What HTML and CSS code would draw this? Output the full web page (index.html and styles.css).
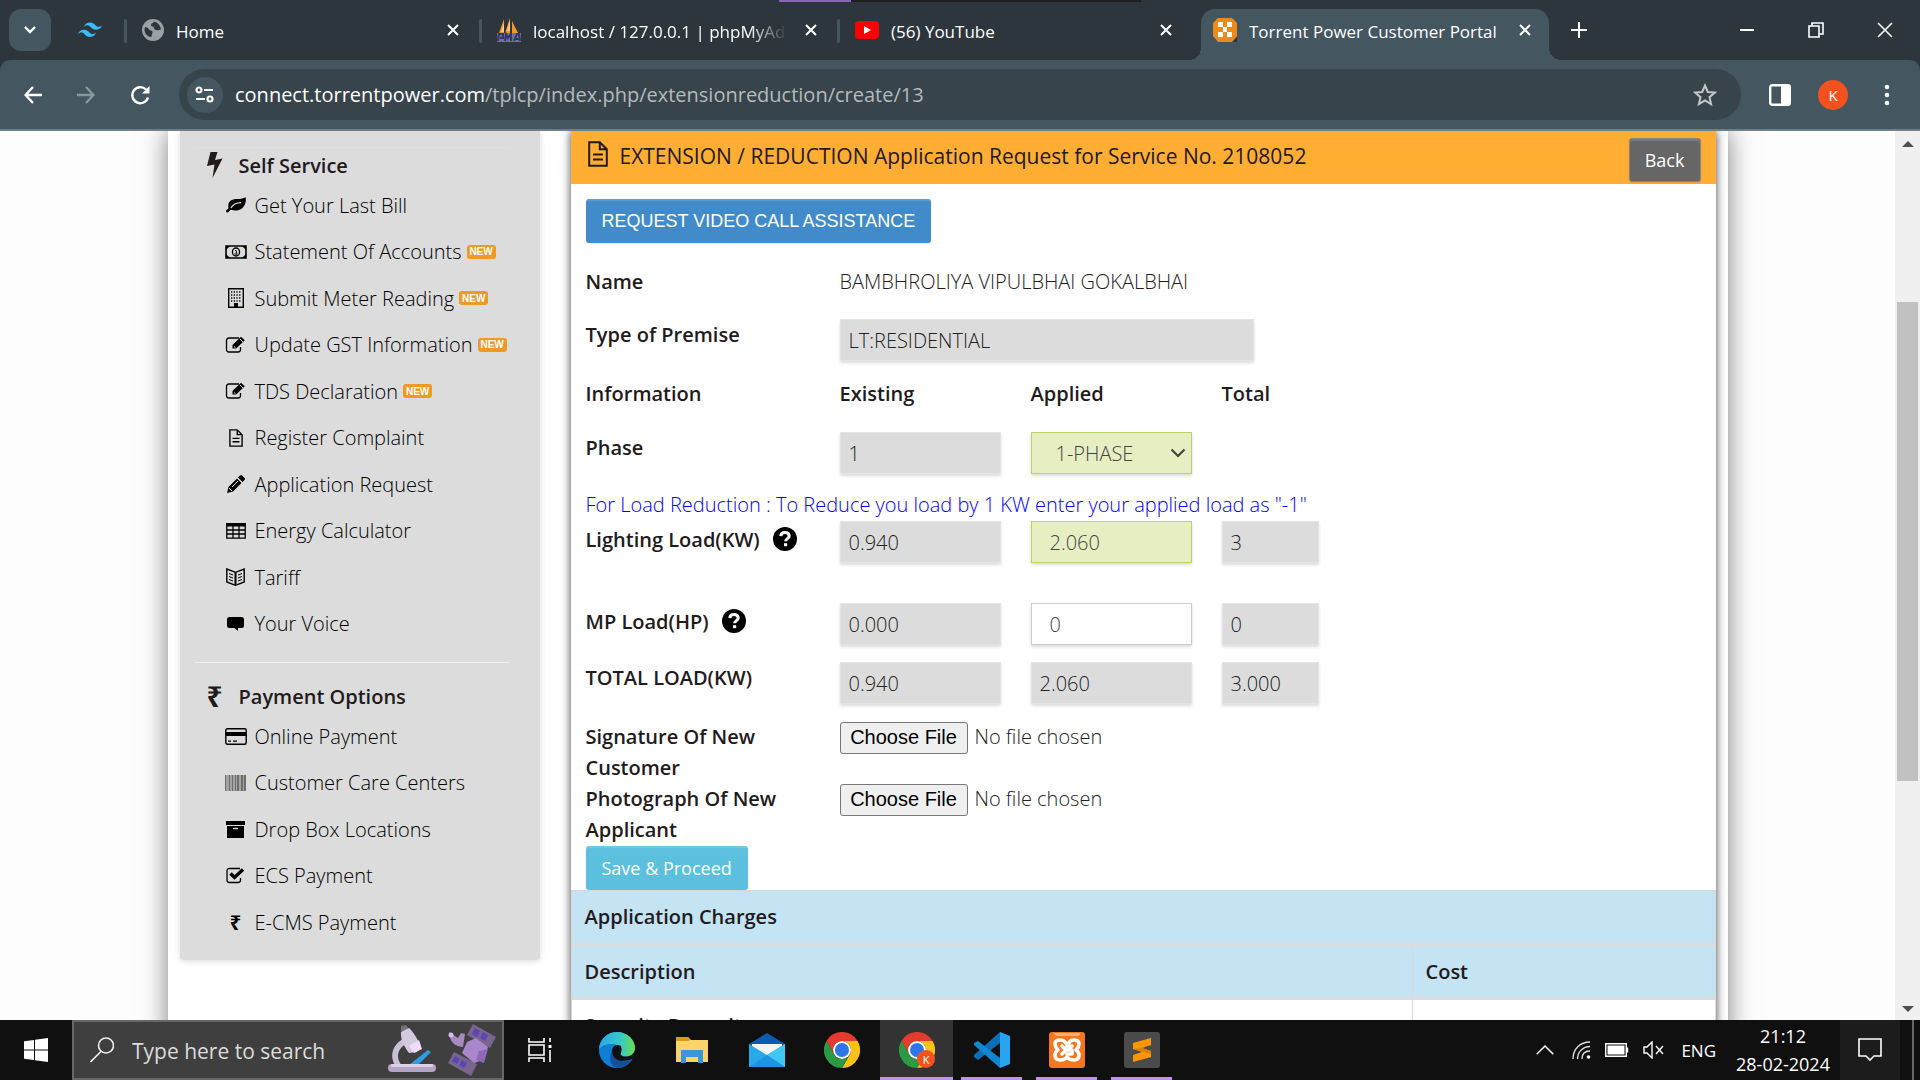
FILE: index.html
```html
<!DOCTYPE html>
<html lang="en">
<head>
<meta charset="utf-8">
<title>Torrent Power Customer Portal</title>
<link rel="stylesheet" href="styles.css">
</head>
<body>
<header class="browser">
  <div class="screen-share"></div>
  <div class="tabstrip">
    <button class="tab-search" aria-label="Search tabs"><svg width="16" height="16" viewBox="0 0 16 16"><path d="M3 5l5 5 5-5" fill="none" stroke="#fff" stroke-width="2.4"/></svg></button>
    <div class="tab pinned"><svg width="24" height="16" viewBox="0 0 24 15"><path fill="#38bdf8" d="M12 0C8.800 0 6.800 1.500 6 4.600c1.200-1.500 2.600-2.100 4.200-1.700.9.200 1.600.900 2.300 1.600C13.700 5.700 15 7.200 18 7.200c3.200 0 5.200-1.500 6-4.600-1.200 1.500-2.600 2.100-4.200 1.700-.9-.200-1.600-.9-2.300-1.600C16.300 1.500 15 0 12 0zM6 7.200c-3.200 0-5.200 1.500-6 4.600 1.200-1.500 2.600-2.100 4.200-1.700.9.200 1.600.9 2.300 1.600C7.700 12.900 9 14.400 12 14.400c3.200 0 5.200-1.500 6-4.600-1.200 1.500-2.600 2.100-4.200 1.700-.9-.2-1.600-.9-2.300-1.600C10.300 8.700 9 7.200 6 7.200z"/></svg></div>
    <div class="tab home">
      <svg width="22" height="22" viewBox="0 0 22 22"><circle cx="11" cy="11" r="11" fill="#9aa0a6"/><path d="M3 8c2 0 3 1 4 2.500s3 .5 3.500 2-1 2.500-1 5.500c-4 0-7-3.500-7-7.500zM12 2.500c-.5 2-3 1.500-3 3.500s3 1 3 3 3 2.500 5 2 2-1 2-1-1-6-7-7.500z" fill="#2c363c"/></svg>
      <span class="tab-title">Home</span>
      <button class="close" aria-label="Close tab"><svg width="14" height="14" viewBox="0 0 14 14"><path d="M2 2l10 10M12 2L2 12" stroke="#fff" stroke-width="2"/></svg></button>
    </div>
    <div class="tab pma">
      <svg width="24" height="24" viewBox="0 0 24 24"><path d="M7 1v14H2zM13 0v15H8zM15 3l6 12h-6z" fill="#f5962b"/><path d="M4 14l3-9v9zM10 13l3-11v11z" fill="#ffc98a"/><path d="M0 15h24v9H0z" fill="#a9a9c4" opacity=".55"/><path d="M1 23l1-7h4v4H3m5 3l1-7 2 4 3-4v7m3 0l3-7h2l1 7m-5-2h5" fill="none" stroke="#34346e" stroke-width="2"/></svg>
      <span class="tab-title fade">localhost / 127.0.0.1 | phpMyAdmin</span>
      <button class="close" aria-label="Close tab"><svg width="14" height="14" viewBox="0 0 14 14"><path d="M2 2l10 10M12 2L2 12" stroke="#fff" stroke-width="2"/></svg></button>
    </div>
    <div class="tab yt">
      <svg width="24" height="18" viewBox="0 0 24 18"><rect width="24" height="18" rx="4" fill="#f00"/><path d="M9 5l7 4-7 4z" fill="#fff"/></svg>
      <span class="tab-title">(56) YouTube</span>
      <button class="close" aria-label="Close tab"><svg width="14" height="14" viewBox="0 0 14 14"><path d="M2 2l10 10M12 2L2 12" stroke="#fff" stroke-width="2"/></svg></button>
    </div>
    <div class="tab active">
      <svg width="24" height="24" viewBox="0 0 24 24"><path d="M20 24h4v-5z" fill="#24323a"/><path d="M5 0h14l5 5v13l-5 6H5l-5-6V5z" fill="#ee8a1a"/><path d="M5 4h5v5H5zM14 4h5v5h-5zM10 9h4v5h-4zM5 14h5v5H5zM14 14h5v5h-5z" fill="#fff"/></svg>
      <span class="tab-title">Torrent Power Customer Portal</span>
      <button class="close" aria-label="Close tab"><svg width="14" height="14" viewBox="0 0 14 14"><path d="M2 2l10 10M12 2L2 12" stroke="#fff" stroke-width="2"/></svg></button>
    </div>
    <button class="new-tab" aria-label="New tab"><svg width="16" height="16" viewBox="0 0 16 16"><path d="M8 0v16M0 8h16" stroke="#fff" stroke-width="2"/></svg></button>
    <div class="window-buttons">
      <button aria-label="Minimize"><svg width="16" height="16" viewBox="0 0 16 16"><path d="M1 8h14" stroke="#fff" stroke-width="2"/></svg></button>
      <button aria-label="Restore"><svg width="16" height="16" viewBox="0 0 16 16"><path d="M1 4h10v11H1zM4 4V1h11v11h-4" fill="none" stroke="#fff" stroke-width="1.600"/></svg></button>
      <button aria-label="Close"><svg width="16" height="16" viewBox="0 0 16 16"><path d="M1 1l14 14M15 1L1 15" stroke="#fff" stroke-width="1.600"/></svg></button>
    </div>
  </div>
  <div class="toolbar">
    <button aria-label="Back"><svg width="18" height="18" viewBox="0 0 18 18"><path d="M18 9H2M9 1L1.500 9 9 17" fill="none" stroke="#fff" stroke-width="2.300"/></svg></button>
    <button aria-label="Forward"><svg width="18" height="18" viewBox="0 0 18 18"><path d="M0 9h16M9 1l7.500 8L9 17" fill="none" stroke="#8b979d" stroke-width="2.300"/></svg></button>
    <button aria-label="Reload"><svg width="20" height="20" viewBox="0 0 20 20"><path d="M18 12.500A8 8 0 1 1 16 4.500L18 6.500" fill="none" stroke="#fff" stroke-width="2.400"/><path d="M19.500 1v7.500H12z" fill="#fff"/></svg></button>
    <div class="address">
      <button class="site-info" aria-label="Site information"><svg width="20" height="18" viewBox="0 0 20 18"><g fill="none" stroke="#fff" stroke-width="2.200"><circle cx="4" cy="4" r="2.500"/><path d="M9 4h9M1 13h9"/><circle cx="15" cy="13" r="2.500"/></g></svg></button>
      <span class="url"><b>connect.torrentpower.com</b>/tplcp/index.php/extensionreduction/create/13</span>
      <svg class="star" width="24" height="24" viewBox="0 0 24 24"><path d="M12 2.500l2.800 6.500 7 .6-5.300 4.600 1.600 6.900-6.100-3.700-6.100 3.700 1.600-6.900L2.200 9.600l7-.6z" fill="none" stroke="#c4c7c9" stroke-width="2"/></svg>
    </div>
    <button class="panel-button" aria-label="Side panel"><svg width="22" height="22" viewBox="0 0 22 22"><rect x="1.200" y="1.200" width="19.600" height="19.600" rx="2" fill="none" stroke="#fff" stroke-width="2.400"/><path d="M12 1h9v20h-9z" fill="#fff"/></svg></button>
    <span class="profile">K</span>
    <button class="menu" aria-label="Menu"><svg width="6" height="22" viewBox="0 0 6 22"><g fill="#fff"><circle cx="3" cy="3" r="2.300"/><circle cx="3" cy="11" r="2.300"/><circle cx="3" cy="19" r="2.300"/></g></svg></button>
  </div>
</header>

<svg class="sprite" aria-hidden="true">
  <symbol id="edit" viewBox="0 0 22 18"><path d="M14 2H4Q1.500 2 1.500 4.500v9Q1.500 16 4 16h9q2.500 0 2.500-2.500V11" fill="none" stroke="#000" stroke-width="1.300"/><path d="M7.500 12.500V9L16 .800l3.800 3.500-8.600 8.200z" fill="#000"/><path d="M9 10.500l1.500 1.200M15 3l3 3" stroke="#dcdcdc" stroke-width="1"/></symbol>
  <symbol id="file" viewBox="0 0 20 26"><path d="M1.200 1.200h10.600l7 7v16.600H1.200zM11.800 1.200v7h7" fill="none" stroke="currentColor" stroke-width="2"/><path d="M5 13.500h10M5 18.500h10" stroke="currentColor" stroke-width="2"/></symbol>
  <symbol id="help" viewBox="0 0 24 24"><circle cx="12" cy="12" r="12" fill="#000"/><path d="M7.800 9.200Q8 5.600 12 5.600t4.200 3.300c0 2.600-3.600 2.800-3.600 5.400" fill="none" stroke="#fff" stroke-width="3"/><path d="M11 16.200h3.200v3H11z" fill="#fff"/></symbol>
</svg>

<main class="viewport">
  <div class="page">
    <div class="site">
      <nav class="sidebar">
        <section class="group first">
          <h2><svg width="16" height="26" viewBox="0 0 16 26"><path d="M3.500 0h7L8 8l7.500-1.500L5.500 26l2-13.500L0 14z" fill="#231a1c"/></svg>Self Service</h2>
          <ul>
            <li><a href="#"><span class="ico"><svg width="20" height="16" viewBox="0 0 20 16"><path d="M19.500 0c1.500 6-2 13-8.500 13.500-3 .3-5-1-6.500-.5-1 .5-2 2.500-3 2.500-.8 0-1.500-.8-1.400-1.500C.3 12.500 2.500 12 2.500 11 1 3.500 7 2 11 2c4 0 7-.5 8.500-2z"/><path d="M5 11c2-3.500 5.500-5.200 10-5.300" fill="none" stroke="#dcdcdc" stroke-width="1.300"/></svg></span>Get Your Last Bill</a></li>
            <li><a href="#"><span class="ico"><svg width="22" height="14" viewBox="0 0 22 14"><path d="M1 1h20v12H1z" fill="none" stroke="#000" stroke-width="1.600"/><path d="M1 1h4L1 5zM21 1v4l-4-4zM1 13V9l4 4zM21 13h-4l4-4z"/><ellipse cx="11" cy="7" rx="3.600" ry="4" fill="none" stroke="#000" stroke-width="1.300"/><path d="M10 5.500h1.300V9M9.500 9h3" fill="none" stroke="#000"/></svg></span>Statement Of Accounts<span class="new">NEW</span></a></li>
            <li><a href="#"><span class="ico"><svg width="16" height="20" viewBox="0 0 16 20"><path d="M.700.700h14.600v18.600H.700z" fill="none" stroke="#000" stroke-width="1.400"/><path d="M3 4h10M3 7h10M3 10h10M3 13h10" stroke="#000" stroke-width="1.300" stroke-dasharray="1.300 1.400"/><path d="M6 15h4v4H6z"/></svg></span>Submit Meter Reading<span class="new">NEW</span></a></li>
            <li><a href="#"><span class="ico"><svg width="22" height="18"><use href="#edit"/></svg></span>Update GST Information<span class="new">NEW</span></a></li>
            <li><a href="#"><span class="ico"><svg width="22" height="18"><use href="#edit"/></svg></span>TDS Declaration<span class="new">NEW</span></a></li>
            <li><a href="#"><span class="ico"><svg width="14" height="18"><use href="#file"/></svg></span>Register Complaint</a></li>
            <li><a href="#"><span class="ico"><svg width="18" height="18" viewBox="0 0 18 18"><path d="M0 18l1.500-6L10 3.500 14.500 8 6 16.500zM11 2.500L13 .5q1-1 2 0L17.500 3q1 1 0 2l-2 2z"/><path d="M2 13l3 3M5 12l6-6" stroke="#dcdcdc" stroke-width="1"/></svg></span>Application Request</a></li>
            <li><a href="#"><span class="ico"><svg width="20" height="16" viewBox="0 0 20 16"><path d="M.8.8h18.400v14.400H.8zM7 3v12M13 3v12M1 7h18M1 11h18" fill="none" stroke="#000" stroke-width="1.300"/><path d="M0 0h20v3.500H0z"/></svg></span>Energy Calculator</a></li>
            <li><a href="#"><span class="ico"><svg width="19" height="18" viewBox="0 0 19 18"><path d="M.8 1l8.700 3.300L18.200 1v13l-8.700 3.300L.8 14z" fill="none" stroke="#000" stroke-width="1.400"/><path d="M9.500 4v13" stroke="#000" stroke-width="2"/><path d="M3 5.500l4 1.500M3 8.500L7 10M3 11.500L7 13M16 5.500L12 7M16 8.500L12 10M16 11.500L12 13" stroke="#000" stroke-width="1"/></svg></span>Tariff</a></li>
            <li><a href="#"><span class="ico"><svg width="17" height="14" viewBox="0 0 17 14"><path d="M2.500 0h12Q17 0 17 2.500v6q0 2.500-2.500 2.500H11v3l-3.500-3h-5Q0 11 0 8.500v-6Q0 0 2.500 0z"/></svg></span>Your Voice</a></li>
          </ul>
        </section>
        <section class="group">
          <h2><span class="rupee">₹</span>Payment Options</h2>
          <ul>
            <li><a href="#"><span class="ico"><svg width="22" height="17" viewBox="0 0 22 17"><rect x=".8" y=".8" width="20.400" height="15.400" rx="1.500" fill="none" stroke="#000" stroke-width="1.400"/><path d="M1 4h20v4H1zM3 12.500h3v1.300H3zM8 12.500h4v1.300H8z"/></svg></span>Online Payment</a></li>
            <li><a href="#"><span class="ico"><svg width="22" height="16" viewBox="0 0 22 16"><path d="M0 0h21v16H0z" fill="#a4a4a4"/><path d="M0 0h1v16H0zM4 0h1v16H4zM7 0h1v16H7zM10 0h1v16h-1zM12 0h2v16h-2zM16 0h2v16h-2zM19 0h2v16h-2z" fill="#6e6e6e"/></svg></span>Customer Care Centers</a></li>
            <li><a href="#"><span class="ico"><svg width="19" height="17" viewBox="0 0 19 17"><path d="M0 0h19v4H0zM1 5h17v12H1z"/><path d="M7 7.500h5" stroke="#dcdcdc" stroke-width="1.400"/></svg></span>Drop Box Locations</a></li>
            <li><a href="#"><span class="ico"><svg width="19" height="17" viewBox="0 0 19 17"><path d="M14 1.500H3.500Q1 1.500 1 4v9q0 2.500 2.500 2.500H12q2.500 0 2.500-2.500v-2" fill="none" stroke="#000" stroke-width="1.300"/><path d="M4.500 6.500L8.500 10.500 17 2.500" fill="none" stroke="#000" stroke-width="3.400"/></svg></span>ECS Payment</a></li>
            <li><a href="#"><span class="ico rupee">₹</span>E-CMS Payment</a></li>
          </ul>
        </section>
      </nav>

      <article class="panel">
        <div class="panel-head">
          <h1><svg width="20" height="26"><use href="#file"/></svg>EXTENSION / REDUCTION Application Request for Service No. 2108052</h1>
          <button class="btn back">Back</button>
        </div>
        <form class="form" onsubmit="return false">
          <button type="button" class="btn video">REQUEST VIDEO CALL ASSISTANCE</button>
          <div class="row name"><strong>Name</strong><span class="wide">BAMBHROLIYA VIPULBHAI GOKALBHAI</span></div>
          <div class="row"><label for="premise">Type of Premise</label><input id="premise" class="wide" value="LT:RESIDENTIAL" readonly></div>
          <div class="row info"><strong>Information</strong><strong>Existing</strong><strong>Applied</strong><strong>Total</strong></div>
          <div class="row phase"><label for="phase">Phase</label><input aria-label="Existing phase" value="1" readonly>
            <span class="select"><select id="phase" class="edited"><option>1-PHASE</option><option>3-PHASE</option></select><svg width="16" height="10" viewBox="0 0 16 10"><path d="M1.500 1.500L8 8l6.500-6.500" fill="none" stroke="#444" stroke-width="2.200"/></svg></span></div>
          <p class="hint">For Load Reduction : To Reduce you load by 1 KW enter your applied load as "-1"</p>
          <div class="row light"><label for="light">Lighting Load(KW)<svg width="24" height="24"><use href="#help"/></svg></label><input aria-label="Existing lighting load" value="0.940" readonly><input id="light" class="edited" value="2.060"><input aria-label="Total lighting load" value="3" readonly></div>
          <div class="row mp"><label for="mp">MP Load(HP)<svg width="24" height="24"><use href="#help"/></svg></label><input aria-label="Existing MP load" value="0.000" readonly><input id="mp" class="plain" value="0"><input aria-label="Total MP load" value="0" readonly></div>
          <div class="row sum"><label for="total">TOTAL LOAD(KW)</label><input aria-label="Existing total load" value="0.940" readonly><input aria-label="Applied total load" value="2.060" readonly><input id="total" value="3.000" readonly></div>
          <div class="row sum"><label for="sign">Signature Of New Customer</label><input id="sign" class="wide" type="file"></div>
          <div class="row photo"><label for="photo">Photograph Of New Applicant</label><input id="photo" class="wide" type="file"></div>
          <button class="btn save">Save &amp; Proceed</button>
        </form>
        <table class="charges">
          <thead>
            <tr><th colspan="2">Application Charges</th></tr>
            <tr><th>Description</th><th class="cost">Cost</th></tr>
          </thead>
          <tbody><tr><td>Security Deposit</td><td></td></tr></tbody>
        </table>
      </article>
    </div>
  </div>
  <div class="scrollbar"><span class="arrow up"></span><span class="thumb"></span><span class="arrow down"></span></div>
</main>

<footer class="taskbar">
  <button class="start" aria-label="Start"><svg width="24" height="24" viewBox="0 0 24 24"><path d="M0 3.200L10 2v9.500H0zM11 1.800L24 0v11.500H11zM0 12.500h10V22L0 20.800zM11 12.500h13V24l-13-1.800z" fill="#fff"/></svg></button>
  <div class="search">
    <svg width="24" height="26" viewBox="0 0 24 26"><circle cx="16" cy="8.500" r="7.500" fill="none" stroke="#f0f0f0" stroke-width="1.600"/><path d="M11 14.500L.5 25" stroke="#f0f0f0" stroke-width="1.600"/></svg>
    <input aria-label="Search" placeholder="Type here to search">
    <svg width="48" height="50" viewBox="0 0 48 50"><path d="M19 12C4 18 0 32 9 43h7C6 33 9 22 22 17z" fill="#c9c0d6"/><path d="M13 1l5-1 3 4-4 4-4-2z" fill="#77717d"/><path d="M13 7l8-4c4 3 9 12 11 17l-3 7-8 1c-4-5-9-14-8-21z" fill="#d3cadd"/><path d="M21 21l10-6 3 9-8 4z" fill="#f0dcff"/><path d="M21 40l19-15 3 2-14 14z" fill="#2f9ee6"/><rect y="39" width="48" height="8" rx="4" fill="#b6a6c6"/><rect x="3" y="39" width="42" height="3" rx="1" fill="#dccfe8"/></svg>
    <svg width="48" height="52" viewBox="0 0 48 52"><path d="M25 0l23 13-6 11-23-13zM6 28l23 12-6 12L0 39z" fill="#77658d"/><path d="M27 4l5 3-3 6-5-3zM35 8l5 3-3 6-5-3zM7 32l5 3-3 5-5-3zM14 36l5 3-3 5-5-3z" fill="#5b45b5"/><path d="M1 8c1 10 5 14 14 15l2-13-4-1-3 5z" fill="#a58abf"/><circle cx="3" cy="11" r="2.500" fill="#d8b8f5"/><path d="M19 18l9-4 12 9-5 13-9 3-12-10z" fill="#a987cd"/><path d="M31 27l9-2-4 14-8-3z" fill="#8f68bd"/></svg>
  </div>
  <button class="task" aria-label="Task view"><svg width="24" height="24" viewBox="0 0 24 24"><path d="M1 0v4h15V0M1 24v-4h15v4M1 7h15v10H1zM22 0v4M22 12v12" fill="none" stroke="#fff" stroke-width="1.600"/><path d="M20.500 7h3v3h-3z" fill="#fff"/></svg></button>
  <button class="app" aria-label="Edge"><svg width="36" height="36" viewBox="0 0 36 36"><defs><linearGradient id="eg" x1="0" x2="1"><stop offset="0" stop-color="#2aa7e8"/><stop offset=".6" stop-color="#36c8c8"/><stop offset="1" stop-color="#6be048"/></linearGradient></defs><circle cx="18" cy="18" r="18" fill="#0f7fd6"/><path d="M0 17C1 6 9 0 18 0c11 0 18 8 18 16 0 6-5 8.500-9 8.500-5 0-6-2-5-4 2-4-1-7-5-8C10 11 3 13 0 17z" fill="url(#eg)"/><path d="M22 14c-6-3-10 2-9 8 1 3 3 6 8 7 5 0 9-1 13-2l2-4V17c0 5-5 7.500-9 7.500-5 0-6-2-5-4q1-4 0-6.500z" fill="#111"/><path d="M13 19c0 9 10 13 20 8-3 6-9 9-15 9-6-1-9-9-5-17z" fill="#12509a"/></svg></button>
  <button class="app" aria-label="File Explorer"><svg width="32" height="28" viewBox="0 0 32 28"><path d="M0 1h12l3 3h17v22H0z" fill="#fcd366"/><path d="M0 1h12l2 3-2 1H0z" fill="#dd9a0b"/><path d="M5 14h22v13h-5v-6H10v6H5z" fill="#3b95d8"/></svg></button>
  <button class="app" aria-label="Mail"><svg width="36" height="34" viewBox="0 0 36 34"><path d="M0 11L18 0l18 11v4H0z" fill="#0a5cb0"/><path d="M3 11h30v12H3z" fill="#f4f4f4"/><path d="M0 11l18 11 18-11v23H0z" fill="#28a9ea"/><path d="M18 22l18-11v23z" fill="#3fc8f5"/><path d="M0 34l18-12 18 12z" fill="#1c95e0"/></svg></button>
  <button class="app" aria-label="Chrome"><svg width="36" height="36" viewBox="0 0 36 36"><path d="M2.400 9A18 18 0 0 1 33.600 9H18a9 9 0 0 0-7.800 13.500z" fill="#e33b2e"/><path d="M33.600 9A18 18 0 0 1 18 36l7.800-13.500A9 9 0 0 0 18 9z" fill="#fbc116"/><path d="M18 36A18 18 0 0 1 2.400 9l7.800 13.500A9 9 0 0 0 25.800 22.500z" fill="#2a9a45"/><circle cx="18" cy="18" r="9" fill="#fff"/><circle cx="18" cy="18" r="7" fill="#2f75ea"/></svg></button>
  <button class="app current" aria-label="Chrome, profile K"><svg width="36" height="36" viewBox="0 0 36 36"><path d="M2.400 9A18 18 0 0 1 33.600 9H18a9 9 0 0 0-7.800 13.500z" fill="#e33b2e"/><path d="M33.600 9A18 18 0 0 1 18 36l7.800-13.500A9 9 0 0 0 18 9z" fill="#fbc116"/><path d="M18 36A18 18 0 0 1 2.400 9l7.800 13.500A9 9 0 0 0 25.800 22.500z" fill="#2a9a45"/><circle cx="18" cy="18" r="9" fill="#fff"/><circle cx="18" cy="18" r="7" fill="#2f75ea"/></svg><span class="badge">K</span></button>
  <button class="app running" aria-label="Visual Studio Code"><svg width="36" height="36" viewBox="0 0 36 36"><path d="M26 0v11L4 28l-4-3v-2z" fill="#0a6fb5"/><path d="M4 9l22 17v10L0 13v-2z" fill="#1187d0"/><path d="M26 0l10 4v28l-10 4z" fill="#27a5f0"/></svg></button>
  <button class="app running" aria-label="XAMPP"><svg width="36" height="36" viewBox="0 0 36 36"><rect width="36" height="36" rx="3" fill="#f4761f"/><path d="M5 1h26v2q-2 1-4 1H9Q6 4 5 2z" fill="#f9b27f"/><g fill="none" stroke="#fff" stroke-width="3.600" stroke-linejoin="round" stroke-linecap="round"><path d="M17 11q-2-3-6-3-5 0-5 4 0 3 3 6-3 2-3 5 0 5 5 5 5 0 7-3 2 3 7 3 5 0 5-5 0-3-3-5 3-3 3-6 0-4-5-4-4 0-5 3"/><path d="M13 14l4 4-4 4M18 14h5l-4 4h4v4h-5"/></g></svg></button>
  <button class="app running" aria-label="Sublime Text"><svg width="36" height="36" viewBox="0 0 36 36"><rect width="36" height="36" rx="3" fill="#4b4b4b"/><path d="M27 6v7l-9 3 9 3v6L9 30v-7l9-3-9-3v-6z" fill="#ff9800"/><path d="M9 17l9-1 9 3v3z" fill="#e07d00"/></svg></button>
  <div class="tray">
    <svg width="18" height="10" viewBox="0 0 18 10"><path d="M.7 9.300L9 1l8.300 8.300" fill="none" stroke="#fff" stroke-width="1.500"/></svg>
    <svg class="wifi" width="19" height="18" viewBox="0 0 19 18"><g fill="none" stroke="#ddd" stroke-width="1.400"><path d="M1 18C1 8 8 1 18 1M5.500 18C5.500 11 11 5.500 18 5.500M10 18c0-5 3-8 8-8"/></g><circle cx="16.500" cy="16" r="1.800" fill="#fff"/></svg>
    <svg width="24" height="14" viewBox="0 0 24 14"><path d="M.7.7h20.600v12.600H.7zM22.500 4.500v5" fill="none" stroke="#fff" stroke-width="1.400"/><path d="M2.500 2.500h17v9h-17z" fill="#fff"/></svg>
    <svg width="22" height="18" viewBox="0 0 22 18"><path d="M1 6h3l5-5v16l-5-5H1zM13 5l7 8M20 5l-7 8" fill="none" stroke="#fff" stroke-width="1.400"/></svg>
    <span>ENG</span>
  </div>
  <div class="clock"><time>21:12</time><time>28-02-2024</time></div>
  <button class="notices" aria-label="Notifications"><svg width="24" height="24" viewBox="0 0 24 24"><path d="M1 1h22v17h-7l-4 4-4-4H1z" fill="none" stroke="#fff" stroke-width="1.600"/></svg></button>
  <span class="show-desktop"></span>
</footer>
</body>
</html>
```
FILE: styles.css
```css
* { box-sizing: border-box; }
body { margin: 0; height: 100vh; display: flex; flex-direction: column; overflow: hidden; font-family: "Open Sans", "Noto Sans", sans-serif; font-size: 20px; color: #231a1c; background: #fdfdfd; }
button, input, select { font: inherit; }
button { border: 0; padding: 0; background: none; color: inherit; }
svg { display: block; flex: none; }
h1, h2, p, ul { margin: 0; padding: 0; }
a { color: inherit; text-decoration: none; }
.sprite { position: absolute; width: 0; height: 0; }

/* browser */
.browser { flex: none; position: relative; background: #2c363c; color: #fff; }
.screen-share { position: absolute; top: 0; left: 779px; width: 362px; height: 2px; background: linear-gradient(90deg, #8764b8 72px, #1f1f1f 72px); }
.tabstrip { display: flex; align-items: center; height: 60px; padding-left: 9px; }
.tab-search { display: grid; place-items: center; width: 42px; height: 42px; border-radius: 12px; background: #44565f; }
.tab { position: relative; display: flex; align-items: center; gap: 12px; height: 51px; padding: 0 17px 0 15px; font-size: 17px; }
.tab-title { flex: 1; padding-top: 3px; white-space: nowrap; overflow: hidden; line-height: 24px; }
.fade { mask-image: linear-gradient(90deg, #000 85%, transparent); }
.close { width: 24px; height: 24px; display: grid; place-items: center; }
.pinned { width: 76px; padding: 0 0 0 27px; }
.home { width: 355px; }
.pma { width: 358px; }
.yt { width: 361px; padding-right: 23px; }
.pinned::after, .home::after, .pma::after { content: ""; position: absolute; right: 0; top: 14px; width: 3px; height: 24px; background: #44565f; border-radius: 2px; }
.tab.active { width: 348px; align-self: flex-end; padding: 0 12px 9px; background: #44565f; border-radius: 14px 14px 0 0; }
.tab.active::before, .tab.active::after { content: ""; position: absolute; bottom: 0; width: 12px; height: 12px; }
.tab.active::before { right: 100%; background: radial-gradient(circle at 0 0, transparent 12px, #44565f 12px); }
.tab.active::after { left: 100%; background: radial-gradient(circle at 100% 0, transparent 12px, #44565f 12px); }
.new-tab { margin-left: 22px; }
.window-buttons { display: flex; gap: 53px; margin-left: auto; padding-right: 27px; }
.toolbar { display: flex; align-items: center; height: 71px; padding: 0 30px 0 24px; gap: 35px; background: #44565f; border-bottom: 2px solid #6d7f88; border-radius: 10px 10px 0 0; }
.address { flex: 1; display: flex; align-items: center; height: 51px; margin-left: -6px; padding: 0 24px 0 8px; background: #38444b; border-radius: 26px; }
.site-info { display: grid; place-items: center; width: 36px; height: 36px; border-radius: 50%; background: #44565f; }
.url { flex: 1; margin-left: 12px; font-size: 20px; color: #b4babd; white-space: nowrap; }
.url b { font-weight: 400; color: #fff; }
.panel-button { margin-left: -7px; }
.profile { display: grid; place-items: center; width: 30px; height: 30px; margin-left: -8px; border-radius: 50%; background: #f4511e; font-size: 15px; }
.menu { margin-left: 1px; }

/* page */
.viewport { flex: 1; min-height: 0; display: flex; overflow: hidden; }
.page { flex: 1; padding: 0 24px; overflow: hidden; }
.site { display: flex; align-items: flex-start; gap: 31px; max-width: 1560px; min-height: 100%; margin: 0 auto; padding: 0 12px; background: #fff; box-shadow: 0 0 24px rgba(0, 0, 0, .5); }
.scrollbar { flex: none; width: 25px; display: flex; flex-direction: column; align-items: center; background: #f0f0f0; padding: 10px 0 8px; }
.arrow { border: 6px solid transparent; border-top: 0; border-bottom: 6px solid #505050; }
.arrow.down { border-top: 6px solid #505050; border-bottom: 0; margin-top: auto; }
.thumb { width: 21px; height: 55%; margin-top: 155px; background: #c1c1c1; }

.sidebar { width: 360px; padding: 16px 30px 15px 15px; background: #dcdcdc; border-radius: 0 0 4px 4px; box-shadow: 0 1px 6px rgba(0, 0, 0, .15); color: #111; }
.group { border-top: 1px solid #f0f0f0; margin-top: 15px; padding-top: 16px; }
.group.first { margin-top: 0; padding-top: 0; border-color: #e0e0e0; }
.group h2 { display: grid; grid-template-columns: 16px 1fr; align-items: center; gap: 16px; height: 34px; padding-left: 12px; font-size: 20px; font-weight: 600; color: #231a1c; }
.rupee { font-family: "Noto Sans", sans-serif; font-weight: 700; font-size: 20px; color: #000; }
h2 .rupee { font-size: 28px; line-height: 28px; color: #231a1c; }
.group ul { list-style: none; padding-left: 30px; }
.group li { height: 46px; }
.group li:nth-child(even) { height: 47px; }
.group a { display: flex; align-items: center; height: 100%; white-space: nowrap; font-weight: 300; color: #000; }
.ico { display: grid; place-items: center; flex: none; width: 22px; margin-right: 8px; }
.new { display: grid; place-items: center; flex: none; width: 29px; height: 14px; margin-left: 5px; border-radius: 3px; background: #ee9a24; color: #fff; font: 700 10px "Liberation Sans", sans-serif; }

.panel { flex: 1; min-height: 900px; background: #fff; box-shadow: 0 0 9px #444; }
.panel-head { display: flex; align-items: flex-start; justify-content: space-between; height: 53px; padding: 7px 15px 0 17px; background: #ffad33; }
.panel-head h1 { display: flex; align-items: center; gap: 12px; height: 36px; font-size: 21px; font-weight: 400; white-space: nowrap; }
.panel-head h1 svg { margin-bottom: 4px; }
.btn { height: 44px; padding: 0 16px; border-radius: 3px; color: #fff; font-size: 18px; box-shadow: inset 0 2px 1px rgba(255, 255, 255, .15), 0 1px 2px rgba(0, 0, 0, .1); }
.back { background: #666; border: 1px solid #858585; padding: 0; width: 72px; }
.video { display: block; background: #428bca; font-family: "Liberation Sans", Arial, sans-serif; }
.save { display: block; background: #5bc0de; margin-top: 1px; }
.form { padding: 15px 15px 0; line-height: 31px; }
.row { display: grid; grid-template-columns: 224px 161px 161px 97px; column-gap: 30px; align-items: start; margin-top: 22px; }
.row > span { font-weight: 300; }
.row label, .row strong { font-weight: 600; }
.row.name { margin-top: 23px; }
.row.info { margin-top: 17px; }
.row.phase { margin-top: 23px; }
.row.sum { margin-top: 17px; }
.row.light, .row.photo { margin-top: 0; }
.row.mp { margin-top: 40px; }
.row label { display: flex; align-items: center; gap: 13px; }
.row.light label, .row.mp label { height: 36px; }
.wide { grid-column: 2 / 5; }
.row input, .row select { width: 100%; height: 42px; padding: 0 8px; border: 1px solid #e4e4e4; border-radius: 0; background: #dcdcdc; color: #222; font-weight: 300; box-shadow: 0 2px 3px rgba(0, 0, 0, .14); }
.row input.wide { width: 414px; }
.row .edited, .row .plain { padding: 0 18px; color: #444; }
.row .edited { background: #e6eec2; border-color: #b9d36a; }
.row .plain { background: #fff; border-color: #ccc; }
.select { display: grid; align-items: center; }
.select select, .select svg { grid-area: 1 / 1; }
.row .select select { appearance: none; padding-left: 24px; }
.select svg { justify-self: end; margin-right: 6px; pointer-events: none; }
.row input[type="file"] { height: 38px; padding: 0; border: 0; background: none; box-shadow: none; }
input::file-selector-button { width: 128px; height: 32px; padding: 0; margin: 0 7px 0 0; border: 1px solid #767676; border-radius: 3px; background: #efefef; color: #000; font: 20px "Liberation Sans", Arial, sans-serif; }
.hint { margin-top: 15px; margin-bottom: 1px; color: #00f; font-weight: 300; }
.charges { width: 100%; border-collapse: collapse; border: 1px solid #d8d8d8; }
.charges th { height: 54px; padding: 0 13px 1px; text-align: left; background: #c4e3f3; border-bottom: 3px solid #dcdcdc; border-right: 1px solid #d8d8d8; font-weight: 600; }
.charges td { padding: 12px 13px; line-height: 27px; border-right: 1px solid #dcdcdc; font-weight: 600; }
.charges .cost { width: 303px; }

/* taskbar */
.taskbar { flex: none; display: flex; height: 60px; background: #101010; color: #fff; font-size: 18px; }
.start { width: 72px; display: grid; place-items: center; }
.search { display: flex; align-items: center; gap: 12px; width: 432px; padding: 0 6px 0 16px; background: #3f3f3f; border: 2px solid #666; }
.search input { flex: 1; min-width: 0; padding: 2px 0 0 6px; border: 0; background: none; font-size: 21px; }
.search input::placeholder { color: #dcdcdc; opacity: 1; }
.task { width: 72px; display: grid; place-items: center; margin-right: 4px; }
.app { position: relative; display: grid; place-items: center; width: 73px; margin-right: 2px; }
.current { background: #333; }
.current::after, .running::after { content: ""; position: absolute; left: 0; right: 0; bottom: 0; height: 3px; background: #bd93f0; }
.running::after { left: 6px; right: 6px; }
.badge { position: absolute; left: 37px; top: 30px; display: grid; place-items: center; width: 18px; height: 18px; border-radius: 50%; background: #f4511e; font-size: 11px; }
.tray { display: flex; align-items: center; gap: 14px; margin-left: auto; }
.tray span { margin-left: 2px; font-size: 17px; }
.wifi { margin-left: 4px; }
.clock { display: flex; flex-direction: column; align-items: center; justify-content: center; width: 114px; margin: 0 0 0 10px; font-size: 18px; line-height: 28px; white-space: nowrap; }
.notices { display: grid; place-items: center; width: 60px; background: #1c1c1c; }
.show-desktop { width: 8px; margin-left: 12px; border-left: 2px solid #666; }
```
